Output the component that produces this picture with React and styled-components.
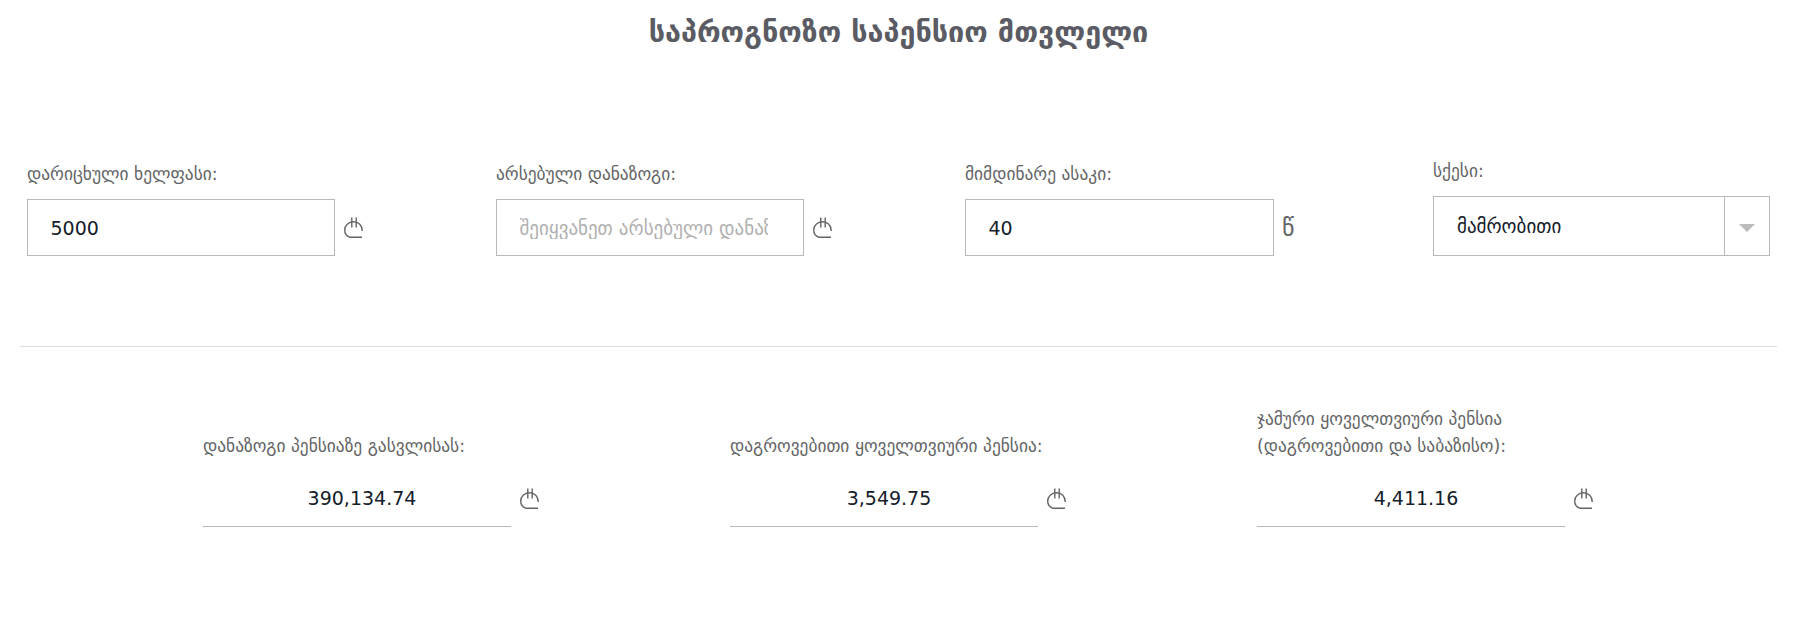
import React from "react";
import styled, { createGlobalStyle } from "styled-components";

const G = createGlobalStyle`
  html, body { margin: 0; padding: 0; background: #fff; }
  body { font-family: "DejaVu Sans", sans-serif; width: 1810px; height: 622px; overflow: hidden; }
`;
const Page = styled.div`
  width: 1810px; height: 622px; display: flex; flex-direction: column;
`;
const Title = styled.h1`
  margin: 0 33px 0 20px; height: 164px; padding-top: 14px; box-sizing: border-box;
  text-align: center; font-size: 28.800px; line-height: 36px; font-weight: 700; color: #5a5b63;
`;
const InputRow = styled.div`
  margin: 0 33px 0 20px; height: 182px; border-bottom: 1px solid #ddd;
  display: grid; grid-template-columns: 469px 469px 468px auto; align-items: start;
`;
const Field = styled.div`
  display: flex; flex-direction: column; padding-left: 7px;
`;
const SexField = styled(Field)`
  margin-top: -3px;
`;
const Label = styled.label`
  font-size: 17.400px; line-height: 20px; color: #636466; margin-bottom: 15px; display: block;
`;
const Line = styled.div`
  display: flex; align-items: center; gap: 8px;
`;
const Input = styled.input`
  width: ${(p) => p.$w || 308}px; height: 57px; box-sizing: border-box; border: 1px solid #b8b8b8; padding: 0 35px 0 22.500px;
  font: 19px "DejaVu Sans", sans-serif; color: #14202a; outline: none;
  &::placeholder { color: #b0b0b0; }
`;
const Unit = styled.span`
  font-size: 24px; color: #636466;
`;
const SelectBox = styled.div`
  width: 337px; height: 60px; box-sizing: border-box; border: 1px solid #b8b8b8; display: flex; align-items: center;
`;
const SelectText = styled.div`
  flex: 1; padding-left: 23px; font-size: 19px; color: #14202a;
`;
const Arrow = styled.div`
  width: 45px; height: 100%; border-left: 1px solid #b8b8b8; display: flex; align-items: center; justify-content: center;
  padding-top: 4px; box-sizing: border-box;
  &::after { content: ""; border: 8px solid transparent; border-top: 8px solid #bbb; border-bottom: 0; }
`;
const Results = styled.div`
  display: grid; grid-template-columns: repeat(3, 308px); column-gap: 219px; padding: 59px 0 0 203px; align-items: end;
`;
const ResultLabel = styled.div`
  font-size: 17.400px; line-height: 26.500px; color: #636466; margin-bottom: 19px; white-space: nowrap;
`;
const ResultLine = styled.div`
  position: relative; width: 308px; height: 49px; line-height: 40px; box-sizing: border-box; padding-left: 10px;
  border-bottom: 1px solid #b8b8b8; text-align: center; font-size: 19px; color: #14202a;
`;
const ResultUnit = styled.span`
  position: absolute; left: 316px; top: 0; display: flex; height: 40px; align-items: center;
`;
const Lari = () => (
  <svg width="21" height="23" viewBox="0 0 21 23" fill="none" stroke="#636466" strokeWidth="1.4">
    <path d="M8.800 1.500V11.500M13.200 1.500V11.500M19.300 15C19.300 9.500 15.500 5.800 10.500 5.800C5.500 5.800 1.700 9.500 1.700 14C1.700 17.500 3.700 20.200 7 21.300H19" />
  </svg>
);
const inputs = [
  { label: "დარიცხული ხელფასი:", value: "5000", unit: <Lari /> },
  { label: "არსებული დანაზოგი:", placeholder: "შეიყვანეთ არსებული დანაზოგი", unit: <Lari /> },
  { label: "მიმდინარე ასაკი:", value: "40", unit: <Unit>წ</Unit>, w: 309 },
];
const results = [
  { label: "დანაზოგი პენსიაზე გასვლისას:", value: "390,134.74" },
  { label: "დაგროვებითი ყოველთვიური პენსია:", value: "3,549.75" },
  { label: <>ჯამური ყოველთვიური პენსია<br />(დაგროვებითი და საბაზისო):</>, value: "4,411.16" },
];
export default function App() {
  return (
    <Page>
      <G />
      <Title>საპროგნოზო საპენსიო მთვლელი</Title>
      <InputRow>
        {inputs.map((f, i) => (
          <Field key={i}>
            <Label>{f.label}</Label>
            <Line>
              <Input $w={f.w} defaultValue={f.value} placeholder={f.placeholder} />
              {f.unit}
            </Line>
          </Field>
        ))}
        <SexField>
          <Label as="div">სქესი:</Label>
          <SelectBox>
            <SelectText>მამრობითი</SelectText>
            <Arrow />
          </SelectBox>
        </SexField>
      </InputRow>
      <Results>
        {results.map((r, i) => (
          <div key={i}>
            <ResultLabel>{r.label}</ResultLabel>
            <ResultLine>{r.value}<ResultUnit><Lari /></ResultUnit></ResultLine>
          </div>
        ))}
      </Results>
    </Page>
  );
}
